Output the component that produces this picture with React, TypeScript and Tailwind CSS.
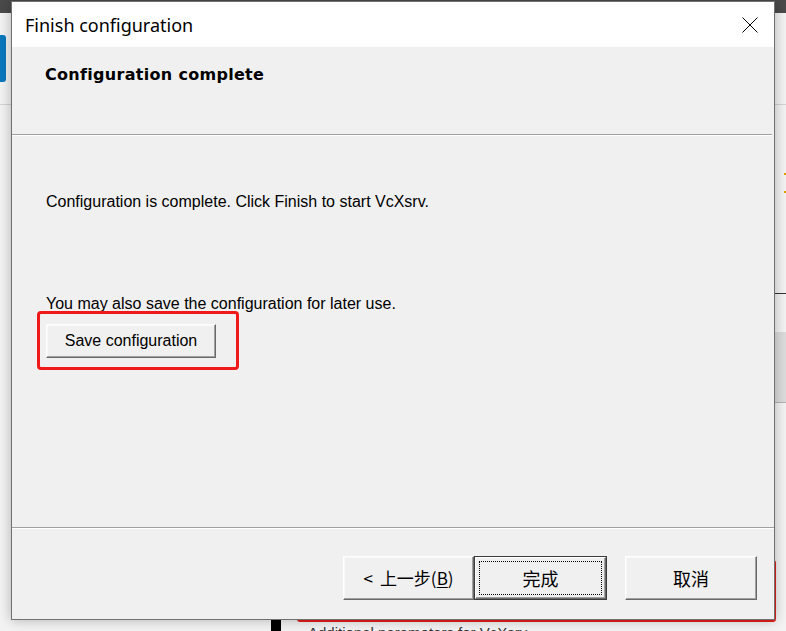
import React from "react";

const ui = "font-['Liberation_Sans',Arial,sans-serif]";
const cjk = "font-['Noto_Sans_CJK_SC','Liberation_Sans',sans-serif]";

function WinButton({ children, isDefault = false, className = "" }: { children: React.ReactNode; isDefault?: boolean; className?: string }) {
  if (isDefault) {
    return (
      <button className={`h-[44px] border border-[#3c3c3c] bg-[#f0f0f0] p-0 ${className}`}>
        <div className="h-full w-full border border-t-white border-l-white border-r-[#696969] border-b-[#696969] shadow-[inset_-1px_-1px_0_#a0a0a0]">
          <div className="mx-[3px] my-[3px] flex h-[calc(100%-6px)] items-center justify-center border border-dotted border-black">
            {children}
          </div>
        </div>
      </button>
    );
  }
  return (
    <button
      className={`flex items-center justify-center border border-t-white border-l-white border-r-[#696969] border-b-[#696969] bg-[#f0f0f0] shadow-[inset_-1px_-1px_0_#a0a0a0,inset_1px_1px_0_#f8f8f8] ${className}`}
    >
      {children}
    </button>
  );
}

export default function App() {
  return (
    <div className="relative h-[631px] w-[786px] overflow-hidden bg-[#f3f3f3]">
      {/* window behind the dialog */}
      <div className="absolute left-0 top-0 h-[13px] w-full bg-[#4a4a4a]" />
      <div className="absolute left-0 top-[35px] h-[47px] w-[6px] rounded-r-[3px] bg-[#0a78be]" />
      <div className="absolute left-0 top-[104px] h-px w-full bg-[#d4d4d4]" />
      <div className="absolute left-[774px] top-[293px] h-px w-[12px] bg-[#333]" />
      <div className="absolute left-[774px] top-[332px] h-[70px] w-[12px] bg-[#dcdcdc]" />
      <div className="absolute left-[774px] top-[402px] h-px w-[12px] bg-[#b4b4b4]" />
      <div className="absolute left-[784px] top-[173px] h-[2px] w-[2px] bg-[#e0a000]" />
      <div className="absolute left-[784px] top-[191px] h-[2px] w-[2px] bg-[#e0a000]" />
      <div className="absolute left-[271px] top-[618px] h-[13px] w-[10px] bg-black" />
      <div className="absolute left-[297px] top-[560px] h-[62px] w-[479px] rounded-[3px] border-[3px] border-[#e3201b]" />
      <div className={`absolute left-[308px] top-[624px] text-[15px] leading-[18px] text-[#333] ${ui}`}>
        Additional parameters for VcXsrv
      </div>

      {/* dialog */}
      <div className="absolute left-[11px] top-[1px] flex h-[619px] w-[764px] flex-col border border-[#717171] bg-[#f0f0f0] shadow-[0_0_12px_rgba(0,0,0,0.28)]">
        <div className="flex h-[45px] shrink-0 items-center justify-between bg-white pl-[13px] pr-[16px]">
          <span className="font-['Noto_Sans',sans-serif] text-[18px] leading-[22px] text-black">Finish configuration</span>
          <svg width="16" height="16" viewBox="0 0 16 16">
            <path d="M0.5 0.5 L15.5 15.5 M15.5 0.5 L0.5 15.5" stroke="#000" strokeWidth="1" fill="none" />
          </svg>
        </div>

        <div className="h-[87px] shrink-0 pl-[33px] pt-[18px]">
          <div className="font-['DejaVu_Sans',Verdana,sans-serif] text-[16px] font-bold leading-[20px] tracking-[0.3px] text-black">
            Configuration complete
          </div>
        </div>
        <div className="mr-[2px] h-px shrink-0 bg-[#a0a0a0]" />
        <div className="mr-[2px] h-px shrink-0 bg-white" />

        <div className={`flex flex-1 flex-col pl-[34px] text-[16px] text-black ${ui}`}>
          <div className="pt-[56px] leading-[20px]">Configuration is complete. Click Finish to start VcXsrv.</div>
          <div className="pt-[82px] leading-[20px]">You may also save the configuration for later use.</div>
          <WinButton className={`mt-[10px] h-[34px] w-[170px] text-[16px] text-black ${ui}`}>Save configuration</WinButton>
        </div>

        <div className="h-px shrink-0 bg-[#a0a0a0]" />
        <div className="h-px shrink-0 bg-white" />

        <div className={`flex h-[90px] shrink-0 items-start justify-end pr-[17px] pt-[27px] text-[17px] text-black ${cjk}`}>
          <WinButton className="h-[44px] w-[131px]">
            <span className="mr-[7px]">&lt;</span>上一步(<span className="underline underline-offset-2">B</span>)
          </WinButton>
          <WinButton isDefault className="w-[133px] text-[18px]">完成</WinButton>
          <WinButton className="ml-[18px] h-[44px] w-[132px] text-[18px]">取消</WinButton>
        </div>
      </div>

      {/* red highlight around save button */}
      <div className="absolute left-[37px] top-[311px] h-[59px] w-[202px] rounded-[4px] border-[3px] border-[#f0191a]" />
    </div>
  );
}
